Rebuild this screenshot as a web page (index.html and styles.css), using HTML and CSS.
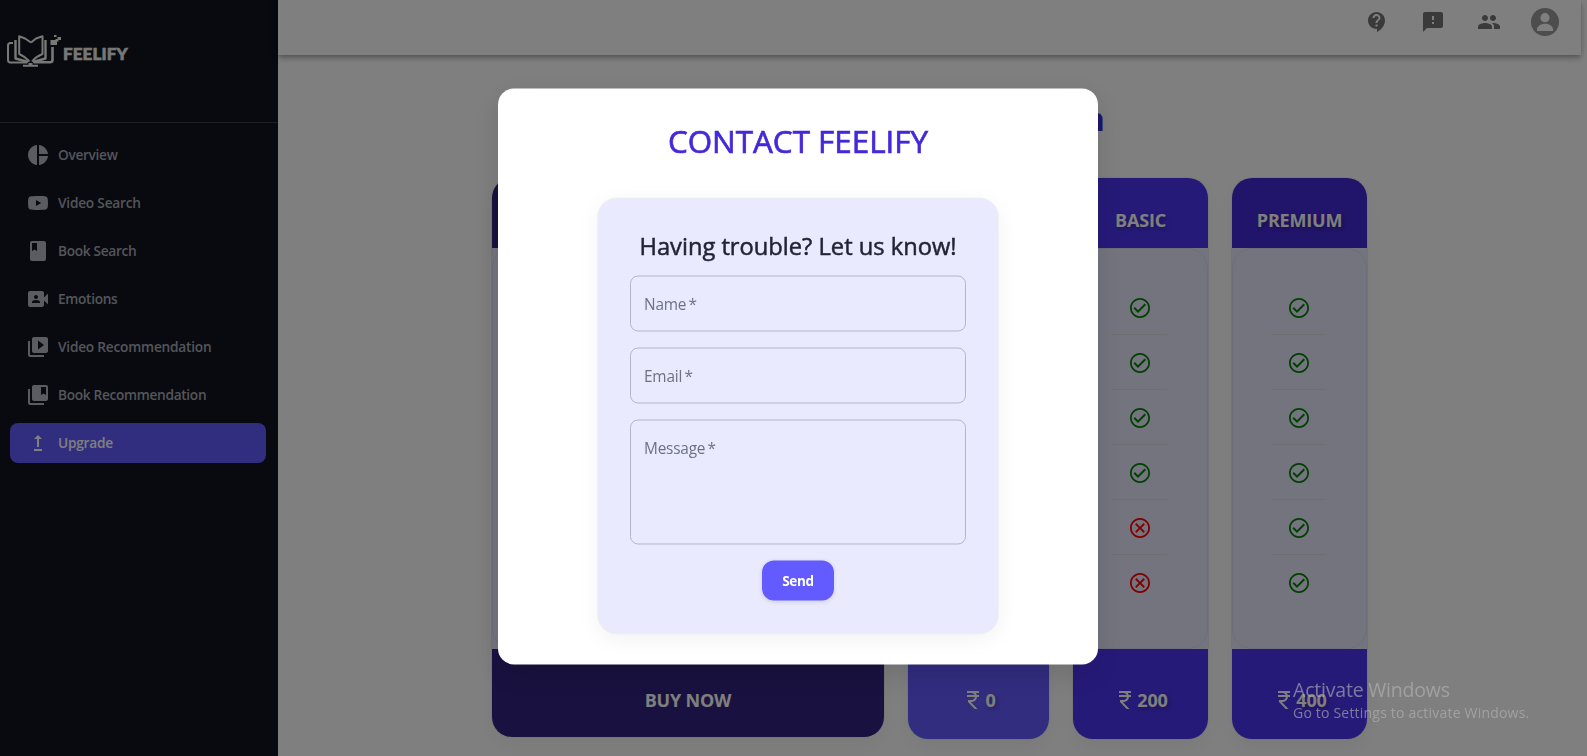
FILE: index.html
```html
<!DOCTYPE html>
<html lang="en">
<head>
<meta charset="utf-8">
<title>Feelify</title>
<link rel="stylesheet" href="styles.css">
</head>
<body>
<svg class="defs" aria-hidden="true">
  <symbol id="ok" viewBox="0 0 24 24"><path d="M16.590 7.580 10 14.170l-3.090-3.080L5.500 12.500l4.500 4.500 8-8zM12 2C6.480 2 2 6.480 2 12s4.480 10 10 10 10-4.480 10-10S17.520 2 12 2m0 18.200c-4.520 0-8.200-3.680-8.200-8.200s3.680-8.200 8.200-8.200 8.200 3.680 8.200 8.200-3.680 8.200-8.200 8.200"/></symbol>
  <symbol id="no" viewBox="0 0 24 24"><path d="M15.600 7.100 12 10.700 8.400 7.100 7.100 8.400l3.600 3.600-3.600 3.600 1.300 1.300 3.600-3.600 3.600 3.600 1.300-1.300-3.600-3.600 3.600-3.600zM12 2C6.470 2 2 6.470 2 12s4.470 10 10 10 10-4.470 10-10S17.530 2 12 2m0 18.200c-4.520 0-8.200-3.680-8.200-8.200s3.680-8.200 8.200-8.200 8.200 3.680 8.200 8.200-3.680 8.200-8.200 8.200"/></symbol>
  <symbol id="rupee" viewBox="0 0 24 24"><path d="M13.660 7c-.56-1.180-1.760-2-3.160-2H6V3h12v2h-3.260c.48.58.84 1.260 1.050 2H18v2h-2.020c-.25 2.800-2.610 5-5.480 5h-.73l6.730 7h-2.770L7 14v-2h3.500c1.760 0 3.220-1.300 3.460-3H6V7z"/></symbol>
</svg>

<div class="app">
  <aside class="sidebar">
    <div class="brand">
      <svg class="brand-mark" viewBox="0 0 56 36">
        <g fill="none" stroke="#f0f0ee" stroke-width="2" stroke-linejoin="round">
          <path d="M6 9H3.500Q1 9 1 11.500V26Q1 28.500 3.500 28.500H20"/>
          <path stroke-width="2.600" d="M45.500 13V26Q45.500 28.300 43 28.300H27"/>
          <path stroke-width="2.400" d="M8.500 6V24.500L21 28"/>
          <path stroke-width="2.400" d="M38.500 6V24.500L26 28"/>
          <path d="M24 8.500 18 4.500 12.200 2.300V20Q18 22.500 22.500 27.500"/>
          <path d="M24 8.500 29 4.500 35.500 2.300V20Q29 22.500 25 27.500"/>
        </g>
        <path fill="#f0f0ee" d="M21.500 29h4v1.800H31v2H16v-2h5.500zM43.500 6H50v5h-6.500zM47 1h2.500v2H47zM50.500 3H54v3h-3.500zM48.500 5h3v2.500h-3z"/>
      </svg>
      <span class="brand-name">FEELIFY</span>
    </div>
    <nav class="nav">
      <a class="nav-item"><svg viewBox="0 0 24 24"><path d="M11 2v20c-5.070-.5-9-4.790-9-10s3.930-9.500 9-10m2.030 0v8.990H22c-.47-4.740-4.240-8.520-8.970-8.990m0 11.010V22c4.740-.47 8.500-4.250 8.970-8.990z"/></svg><span>Overview</span></a>
      <a class="nav-item vs"><svg viewBox="0 0 24 24"><path d="M10 15l5.190-3L10 9zM21.560 7.170c.13.47.22 1.100.28 1.900.07.8.1 1.490.1 2.090L22 12c0 2.190-.16 3.800-.44 4.830-.25.9-.83 1.480-1.730 1.730-.47.13-1.330.22-2.650.28-1.300.07-2.490.1-3.590.1L12 19c-4.190 0-6.800-.16-7.830-.44-.9-.25-1.480-.83-1.730-1.730-.13-.47-.22-1.100-.28-1.900-.07-.8-.1-1.490-.1-2.090L2 12c0-2.190.16-3.800.44-4.830.25-.9.83-1.480 1.730-1.730.47-.13 1.330-.22 2.650-.28 1.300-.07 2.490-.1 3.590-.1L12 5c4.190 0 6.800.16 7.830.44.9.25 1.480.83 1.730 1.730"/></svg><span>Video Search</span></a>
      <a class="nav-item"><svg viewBox="0 0 24 24"><path d="M18 2H6c-1.100 0-2 .9-2 2v16c0 1.100.9 2 2 2h12c1.100 0 2-.9 2-2V4c0-1.100-.9-2-2-2M6 4h5v8l-2.500-1.500L6 12z"/></svg><span>Book Search</span></a>
      <a class="nav-item"><svg viewBox="0 0 24 24"><path d="M18 10.480V6c0-1.100-.9-2-2-2H4c-1.100 0-2 .9-2 2v12c0 1.100.9 2 2 2h12c1.100 0 2-.9 2-2v-4.480l4 3.980v-11zM10 8c1.100 0 2 .9 2 2s-.9 2-2 2-2-.9-2-2 .9-2 2-2m4 8H6v-.57c0-.81.480-1.530 1.220-1.850.85-.37 1.790-.58 2.780-.58s1.930.21 2.780.58c.74.32 1.220 1.040 1.220 1.850z"/></svg><span>Emotions</span></a>
      <a class="nav-item vr"><svg viewBox="0 0 24 24"><path d="M4 6H2v14c0 1.100.9 2 2 2h14v-2H4zm16-4H8c-1.100 0-2 .9-2 2v12c0 1.100.9 2 2 2h12c1.100 0 2-.9 2-2V4c0-1.100-.9-2-2-2m-8 12.500v-9l6 4.500z"/></svg><span>Video Recommendation</span></a>
      <a class="nav-item"><svg viewBox="0 0 24 24"><path d="M4 6H2v14c0 1.100.9 2 2 2h14v-2H4zm16-4H8c-1.100 0-2 .9-2 2v12c0 1.100.9 2 2 2h12c1.100 0 2-.9 2-2V4c0-1.100-.9-2-2-2m0 10-2.500-1.500L15 12V4h5z"/></svg><span>Book Recommendation</span></a>
      <a class="nav-item active"><svg viewBox="0 0 24 24"><path d="M16 18v2H8v-2zM11 7.990V16h2V7.990h3L12 4 8 7.990z"/></svg><span>Upgrade</span></a>
    </nav>
  </aside>

  <div class="main">
    <header class="topbar">
      <svg viewBox="0 0 24 24"><path d="M11.500 2C6.810 2 3 5.810 3 10.500S6.810 19 11.500 19h.5v3c4.860-2.340 8-7 8-11.500C20 5.810 16.190 2 11.500 2m1 14.500h-2v-2h2zm0-3.500h-2c0-3.250 3-3 3-5 0-1.100-.9-2-2-2s-2 .9-2 2h-2c0-2.210 1.790-4 4-4s4 1.790 4 4c0 2.500-3 2.750-3 5"/></svg>
      <svg viewBox="0 0 24 24"><path d="M20 2H4c-1.100 0-1.990.9-1.990 2L2 22l4-4h14c1.100 0 2-.9 2-2V4c0-1.100-.9-2-2-2m-7 12h-2v-2h2zm0-4h-2V6h2z"/></svg>
      <svg viewBox="0 0 24 24"><path d="M16 11c1.660 0 2.990-1.340 2.990-3S17.660 5 16 5s-3 1.340-3 3 1.340 3 3 3m-8 0c1.660 0 2.990-1.340 2.990-3S9.660 5 8 5 5 6.340 5 8s1.340 3 3 3m0 2c-2.330 0-7 1.170-7 3.500V19h14v-2.500c0-2.330-4.670-3.500-7-3.500m8 0c-.29 0-.62.020-.97.050 1.160.84 1.970 1.970 1.970 3.450V19h6v-2.500c0-2.330-4.670-3.500-7-3.500"/></svg>
      <svg class="avatar" viewBox="0 0 28 28"><circle cx="14" cy="14" r="14" fill="#9a9a9a"/><circle cx="14" cy="9.700" r="4.600" fill="#fff"/><path fill="#fff" d="M6 23v-1.500C6 17.500 11 15.800 14 15.800s8 1.700 8 5.700V23z"/></svg>
    </header>
    <section class="pricing">
      <h1 class="pricing-title">Choose Your Plan</h1>
      <div class="plans">
        <div class="plan features">
          <div class="plan-head">FEATURES</div>
          <div class="plan-body"></div>
          <div class="plan-foot">BUY NOW</div>
        </div>
        <div class="plan free">
          <div class="plan-head">FREE</div>
          <div class="plan-body"></div>
          <div class="plan-foot shade"><svg><use href="#rupee"/></svg><span>0</span></div>
        </div>
        <div class="plan basic">
          <div class="plan-head shade">BASIC</div>
          <div class="plan-body"><ul class="marks">
            <li><svg><use href="#ok"/></svg></li><li><svg><use href="#ok"/></svg></li><li><svg><use href="#ok"/></svg></li><li><svg><use href="#ok"/></svg></li><li class="off"><svg><use href="#no"/></svg></li><li class="off"><svg><use href="#no"/></svg></li>
          </ul></div>
          <div class="plan-foot shade"><svg><use href="#rupee"/></svg><span>200</span></div>
        </div>
        <div class="plan premium">
          <div class="plan-head shade">PREMIUM</div>
          <div class="plan-body"><ul class="marks">
            <li><svg><use href="#ok"/></svg></li><li><svg><use href="#ok"/></svg></li><li><svg><use href="#ok"/></svg></li><li><svg><use href="#ok"/></svg></li><li><svg><use href="#ok"/></svg></li><li><svg><use href="#ok"/></svg></li>
          </ul></div>
          <div class="plan-foot shade"><svg><use href="#rupee"/></svg><span>400</span></div>
        </div>
      </div>
    </section>
  </div>
</div>

<div class="backdrop"></div>
<div class="modal">
  <h2 class="modal-title">CONTACT FEELIFY</h2>
  <form class="contact">
    <h3 class="contact-title">Having trouble? Let us know!</h3>
    <div class="field">Name *</div>
    <div class="field">Email *</div>
    <div class="field tall">Message *</div>
    <button class="send" type="button">Send</button>
  </form>
</div>
<div class="watermark">
  <p class="wm-title">Activate Windows</p>
  <p class="wm-text">Go to Settings to activate Windows.</p>
</div>
</body>
</html>
```
FILE: styles.css
```css
* { box-sizing: border-box; }
body { margin: 0; width: 1587px; height: 756px; overflow: hidden; background: #fff; font-family: "Open Sans", "Noto Sans", sans-serif; }
h1, h2, h3, p, ul { margin: 0; padding: 0; }
.defs { display: none; }

.app { display: flex; height: 756px; }

.sidebar { width: 278px; flex: none; background: #12141e; color: #a6abb6; }
.brand { display: flex; height: 123px; padding: 34px 0 0 7px; border-bottom: 1px solid #383b4d; }
.brand-mark { width: 56px; height: 36px; }
.brand-name { font: 900 17px/20px Lato, sans-serif; letter-spacing: .1px; color: #eee; padding-top: 10px; -webkit-text-stroke: .6px #eee; }
.nav { display: flex; flex-direction: column; gap: 8px; padding: 12px 12px 0 10px; }
.nav-item { display: flex; align-items: center; height: 40px; padding-left: 16px; border-radius: 8px; font-size: 13.7px; font-weight: 600; letter-spacing: -.32px; white-space: nowrap; }
.nav-item.vs, .nav-item.vr, .nav-item.active { letter-spacing: -.22px; }
.nav-item span { padding-bottom: 1px; }
.nav-item svg { width: 24px; height: 24px; margin-right: 8px; fill: #b4b8c4; }
.nav-item.active { background: #645cff; color: #fff; }
.nav-item.active svg { fill: #fff; }

.main { flex: 1; min-width: 0; }
.topbar { display: flex; justify-content: flex-end; align-items: flex-start; gap: 32px; width: 1303px; height: 55px; padding: 10px 22px 0 0; box-shadow: 0 2px 4px -1px rgba(0,0,0,.2), 0 4px 5px rgba(0,0,0,.14), 0 1px 10px rgba(0,0,0,.12); }
.topbar svg { width: 24px; height: 24px; fill: #757575; }
.topbar .avatar { width: 28px; height: 28px; margin: -2px 0 0 -2px; }

.pricing { padding: 44px 0 0 214px; }
.pricing-title { width: 613px; height: 79px; font-size: 33px; line-height: 40px; font-weight: 700; text-align: right; color: #4329d6; }
.plans { display: flex; align-items: flex-start; }
.plan { color: #fff; font-size: 18px; font-weight: 700; letter-spacing: -.2px; border-radius: 20px; box-shadow: 0 0 0 1px rgba(0,0,0,.04), 0 8px 20px rgba(0,0,0,.05); }
.features { width: 392px; margin-right: 24px; }
.free { width: 141px; margin-right: 24px; }
.basic { width: 135px; margin-right: 24px; }
.premium { width: 135px; }
.plan-head { display: flex; align-items: center; justify-content: center; height: 70px; padding-top: 13px; border-radius: 20px 20px 0 0; }
.plan-body { position: relative; height: 401px; padding: 32px 2px 0 0; background: #e9e9ff; box-shadow: 0 0 0 1px #e4e4f4; clip-path: inset(0 -1px); }
.plan-body::after { content: ""; position: absolute; inset: 0; border-radius: 20px; border: 1px solid rgba(90,90,130,.09); }
.plan-foot { display: flex; align-items: center; justify-content: center; height: 90px; padding-top: 12px; border-radius: 0 0 20px 20px; }
.features .plan-foot { height: 88px; padding-top: 13px; }
.plan-foot svg { width: 24px; height: 24px; fill: #fff; }
.shade { text-shadow: 2px 2px 4px rgba(0,0,0,.3); }
.features .plan-head, .features .plan-foot { background: #322380; }
.free .plan-head, .free .plan-foot { background: #645aff; }
.basic .plan-head, .basic .plan-foot, .premium .plan-foot { background: #4c34f2; }
.premium .plan-head { background: #4329d6; }
.marks { list-style: none; width: 55px; margin: 0 auto; }
.marks li { display: flex; align-items: center; justify-content: center; height: 55px; padding-top: 2px; border-bottom: 1px solid #dedee4; }
.marks li:last-child { border-bottom: 0; height: 54px; }
.marks svg { width: 24px; height: 24px; fill: #008000; }
.marks .off svg { fill: #f00; }

.backdrop { position: fixed; inset: 0; background: rgba(0,0,0,.5); }
.modal { position: fixed; left: 498px; top: 88px; transform: translateY(.5px); width: 600px; height: 576px; padding: 31px 0 0; border-radius: 16px; background: #fff; box-shadow: 0 10px 30px rgba(0,0,0,.12); display: flex; flex-direction: column; align-items: center; }
.modal-title { font-size: 31.4px; line-height: 41px; font-weight: 400; color: #4329d9; white-space: nowrap; -webkit-text-stroke: .7px #4329d9; }
.contact { width: 402px; height: 437px; margin-top: 37px; padding: 32px 32px 0; border-radius: 20px; background: #eaeaff; border: 1px solid #f0f0f0; box-shadow: 0 5px 22px rgba(0,0,0,.05); display: flex; flex-direction: column; align-items: center; }
.contact-title { font-size: 23.7px; line-height: 30px; height: 45px; font-weight: 400; color: #1f2433; white-space: nowrap; -webkit-text-stroke: .5px #1f2433; }
.field { width: 336px; height: 56px; flex: none; margin-bottom: 16px; padding: 16px 13px; border: 1px solid #b5b5c8; border-radius: 8px; font-size: 15.4px; line-height: 24px; letter-spacing: -.2px; word-spacing: -1.5px; color: #6c737f; }
.field.tall { height: 125px; }
.send { width: 72px; height: 40px; border: 0; border-radius: 12px; background: #635bff; color: #fff; font: 700 13.5px "Open Sans", sans-serif; letter-spacing: -.3px; padding: 0 0 1px; box-shadow: 0 1px 4px rgba(0,0,0,.12); }

.watermark { position: fixed; left: 1293px; top: 676px; color: rgba(180,180,180,.62); white-space: nowrap; }
.wm-title { font-size: 19.5px; line-height: 27px; letter-spacing: -.2px; }
.wm-text { font-size: 14px; line-height: 19px; letter-spacing: .2px; }
```
